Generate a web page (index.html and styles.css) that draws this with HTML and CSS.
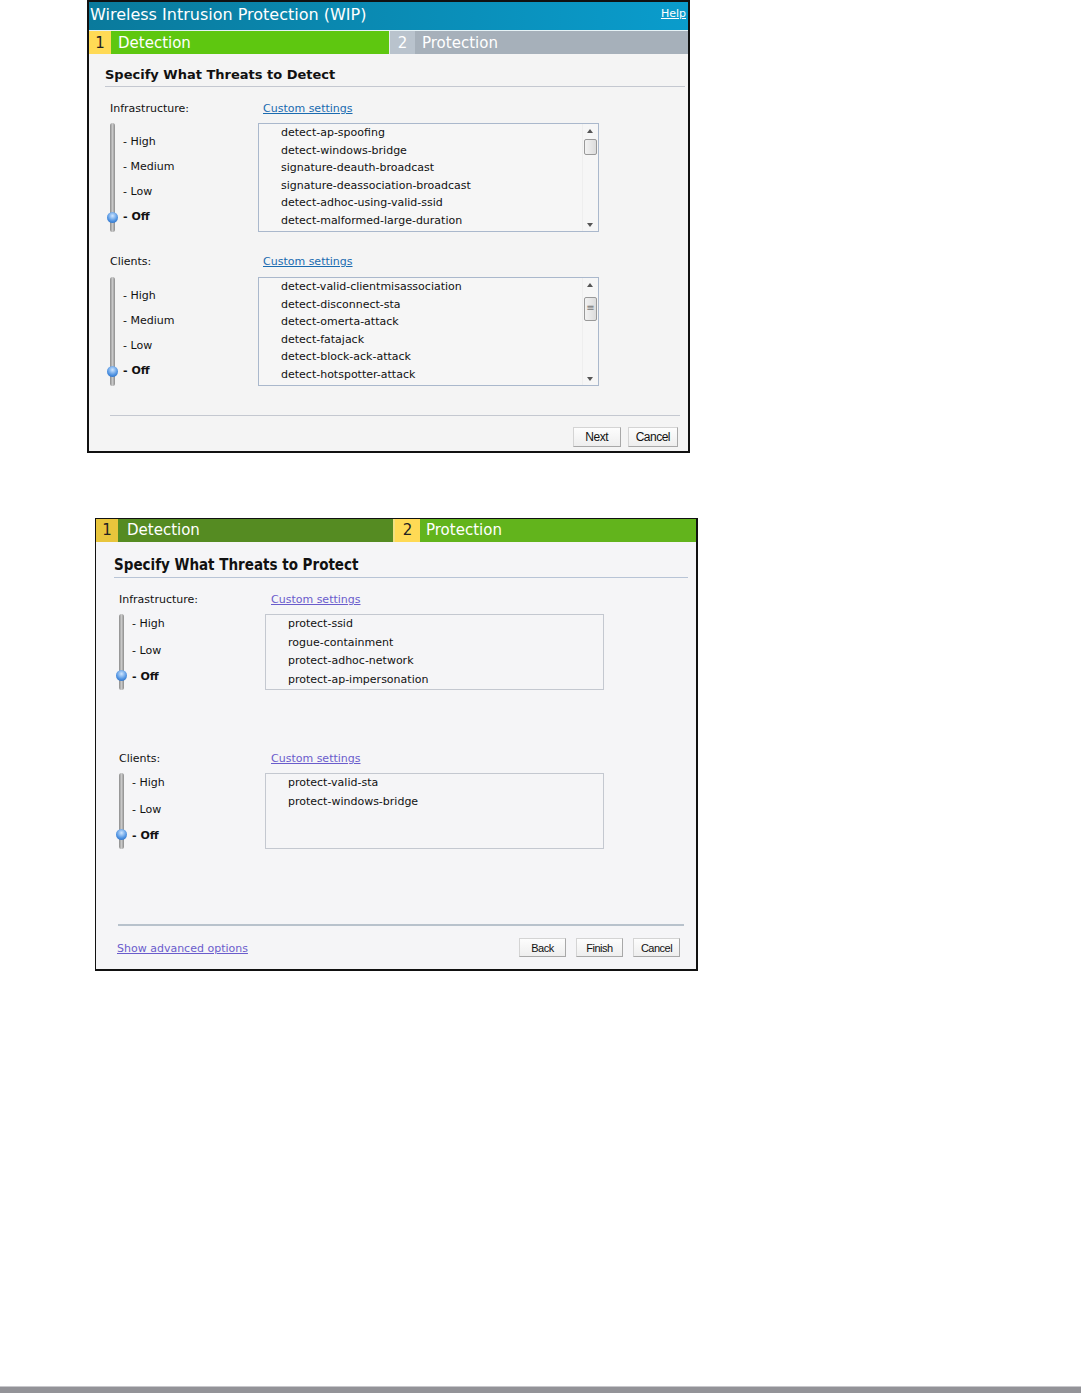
FILE: index.html
```html
<!DOCTYPE html>
<html lang="en">

<head>
    <meta charset="UTF-8">
    <meta name="viewport" content="width=device-width, initial-scale=1.0">
    <link rel="stylesheet" href="styles.css">
</head>

<body>

    <!-- Крок 1: виявлення -->
    <div class="wizard wizard-detect">
        <div class="title-bar">
            <span class="title">Wireless Intrusion Protection (WIP)</span>
            <a class="help" href="#">Help</a>
        </div>
        <div class="steps">
            <div class="step-num num-yellow">1</div>
            <div class="step-name name-green">Detection</div>
            <div class="step-num num-grey">2</div>
            <div class="step-name name-grey">Protection</div>
        </div>
        <div class="content">
            <h2 class="heading">Specify What Threats to Detect</h2>

            <div class="group">
                <div class="group-head">
                    <span class="group-label">Infrastructure:</span>
                    <a class="custom" href="#">Custom settings</a>
                </div>
                <div class="group-body">
                    <div class="slider slider-4">
                        <div class="track"><span class="knob"></span></div>
                        <ul class="levels">
                            <li>- High</li>
                            <li>- Medium</li>
                            <li>- Low</li>
                            <li class="active">- Off</li>
                        </ul>
                    </div>
                    <div class="listbox">
                        <ul class="items">
                            <li>detect-ap-spoofing</li>
                            <li>detect-windows-bridge</li>
                            <li>signature-deauth-broadcast</li>
                            <li>signature-deassociation-broadcast</li>
                            <li>detect-adhoc-using-valid-ssid</li>
                            <li>detect-malformed-large-duration</li>
                        </ul>
                        <div class="scrollbar">
                            <span class="arrow up"></span>
                            <div class="rail"><span class="thumb"></span></div>
                            <span class="arrow down"></span>
                        </div>
                    </div>
                </div>
            </div>

            <div class="group">
                <div class="group-head">
                    <span class="group-label">Clients:</span>
                    <a class="custom" href="#">Custom settings</a>
                </div>
                <div class="group-body">
                    <div class="slider slider-4">
                        <div class="track"><span class="knob"></span></div>
                        <ul class="levels">
                            <li>- High</li>
                            <li>- Medium</li>
                            <li>- Low</li>
                            <li class="active">- Off</li>
                        </ul>
                    </div>
                    <div class="listbox">
                        <ul class="items">
                            <li>detect-valid-clientmisassociation</li>
                            <li>detect-disconnect-sta</li>
                            <li>detect-omerta-attack</li>
                            <li>detect-fatajack</li>
                            <li>detect-block-ack-attack</li>
                            <li>detect-hotspotter-attack</li>
                        </ul>
                        <div class="scrollbar">
                            <span class="arrow up"></span>
                            <div class="rail rail-low"><span class="thumb grip">&#8801;</span></div>
                            <span class="arrow down"></span>
                        </div>
                    </div>
                </div>
            </div>

            <div class="footer">
                <span></span>
                <div class="buttons">
                    <button type="button">Next</button>
                    <button type="button">Cancel</button>
                </div>
            </div>
        </div>
    </div>

    <!-- Крок 2: захист -->
    <div class="wizard wizard-protect">
        <div class="steps">
            <div class="step-num num-gold">1</div>
            <div class="step-name name-dark">Detection</div>
            <div class="step-num num-yellow">2</div>
            <div class="step-name name-lime">Protection</div>
        </div>
        <div class="content">
            <h2 class="heading">Specify What Threats to Protect</h2>

            <div class="group">
                <div class="group-head">
                    <span class="group-label">Infrastructure:</span>
                    <a class="custom visited" href="#">Custom settings</a>
                </div>
                <div class="group-body">
                    <div class="slider slider-3">
                        <div class="track"><span class="knob"></span></div>
                        <ul class="levels">
                            <li>- High</li>
                            <li>- Low</li>
                            <li class="active">- Off</li>
                        </ul>
                    </div>
                    <div class="listbox">
                        <ul class="items">
                            <li>protect-ssid</li>
                            <li>rogue-containment</li>
                            <li>protect-adhoc-network</li>
                            <li>protect-ap-impersonation</li>
                        </ul>
                    </div>
                </div>
            </div>

            <div class="group">
                <div class="group-head">
                    <span class="group-label">Clients:</span>
                    <a class="custom visited" href="#">Custom settings</a>
                </div>
                <div class="group-body">
                    <div class="slider slider-3">
                        <div class="track"><span class="knob"></span></div>
                        <ul class="levels">
                            <li>- High</li>
                            <li>- Low</li>
                            <li class="active">- Off</li>
                        </ul>
                    </div>
                    <div class="listbox">
                        <ul class="items">
                            <li>protect-valid-sta</li>
                            <li>protect-windows-bridge</li>
                        </ul>
                    </div>
                </div>
            </div>

            <div class="footer">
                <a class="advanced" href="#">Show advanced options</a>
                <div class="buttons">
                    <button type="button">Back</button>
                    <button type="button">Finish</button>
                    <button type="button">Cancel</button>
                </div>
            </div>
        </div>
    </div>

    <div class="bottom-bar"></div>

</body>

</html>
```

FILE: styles.css
```css
html,
body {
    height: 100%;
}

body {
    margin: 0;
    background-color: #fff;
    font-family: "DejaVu Sans", Verdana, sans-serif;
    color: #111;
    display: flex;
    flex-direction: column;
}

ul {
    list-style: none;
    margin: 0;
    padding: 0;
}

.wizard {
    border: 2px solid #111;
    background-color: #f4f4f4;
}

.wizard-detect {
    width: 599px;
    height: 449px;
    margin-left: 87px;
}

.wizard-protect {
    width: 600px;
    height: 450px;
    margin-left: 95px;
    margin-top: 65px;
    border-width: 1px 2px 2px 1px;
    background-color: #f5f5f7;
}

.title-bar {
    display: flex;
    justify-content: space-between;
    align-items: center;
    height: 28px;
    padding: 0 2px 0 1px;
    background: linear-gradient(to right, #0a7a9c, #0a9ccc);
    border-bottom: 1px solid #e6f2f6;
}

.title {
    color: #fff;
    font-size: 16px;
    margin-top: -3px;
}

.help {
    color: #fff;
    font-size: 11px;
    align-self: flex-start;
    margin-top: 5px;
}

.steps {
    display: flex;
    height: 23px;
    color: #fff;
    font-size: 15px;
    line-height: 24px;
}

.step-num {
    width: 22px;
    text-align: center;
}

.step-name {
    padding-left: 7px;
}

.name-green {
    width: 271px;
    background-color: #5ec710;
    border-right: 1px solid #e8ecef;
}

.name-grey {
    flex: 1;
    background-color: #a6b0ba;
}

.num-yellow {
    background-color: #ffda55;
    color: #222;
}

.num-grey {
    width: 25px;
    background-color: #b9c3cd;
}

.num-gold {
    background-color: #e8c53c;
    color: #222;
}

.name-dark {
    width: 266px;
    padding-left: 9px;
    background-color: #558b22;
    border-right: 2px solid #f0e080;
}

.name-lime {
    flex: 1;
    padding-left: 6px;
    background-color: #62b41c;
}

.wizard-protect .steps {
    line-height: 23px;
}

.wizard-protect .num-yellow {
    width: 25px;
}

.content {
    padding: 13px 3px 0 16px;
}

.heading {
    margin: 0;
    padding: 0 0 4px 0;
    font-size: 13px;
    font-weight: bold;
    border-bottom: 1px solid #c4c8d0;
}

.wizard-protect .content {
    padding: 14px 8px 0 18px;
}

.wizard-protect .heading {
    font-family: "DejaVu Sans Condensed", "DejaVu Sans", sans-serif;
    font-stretch: condensed;
    font-size: 15px;
    padding-bottom: 3px;
    border-bottom-color: #b8c4d6;
}

.group {
    padding-left: 5px;
    margin-top: 15px;
}

.group + .group {
    margin-top: 23px;
}

.group-head {
    display: flex;
    font-size: 11px;
    height: 16px;
}

.group-label {
    width: 153px;
}

.custom {
    color: #1a6bb0;
}

.custom.visited,
.advanced {
    color: #6a5ccc;
}

.group-body {
    display: flex;
    margin-top: 5px;
}

.wizard-detect .group + .group .group-body {
    margin-top: 6px;
}

.slider {
    display: flex;
    width: 148px;
}

.track {
    position: relative;
    width: 5px;
    border-radius: 3px;
    background: linear-gradient(to right, #8c8c8c, #c8c8c8, #8c8c8c);
}

.knob {
    position: absolute;
    left: -3px;
    bottom: 9px;
    width: 11px;
    height: 11px;
    border-radius: 50%;
    background: radial-gradient(circle at 50% 35%, #cfe6ff, #4a8fe0 60%, #2a62b0);
}

.levels {
    padding-left: 8px;
    font-size: 11px;
}

.levels li {
    height: 25px;
}

.levels .active {
    font-weight: bold;
}

.slider-4 {
    height: 109px;
}

.slider-4 .levels {
    padding-top: 12px;
}

.slider-3 {
    height: 76px;
}

.slider-3 .levels {
    padding-top: 3px;
}

.slider-3 .levels li {
    height: 26.5px;
}

.listbox {
    display: flex;
    width: 339px;
    height: 107px;
    border: 1px solid #aab8cc;
    background-color: #f6f6f6;
}

.items {
    flex: 1;
    padding: 2px 0 0 22px;
    font-size: 11px;
}

.items li {
    height: 17.6px;
}

.scrollbar {
    display: flex;
    flex-direction: column;
    width: 15px;
    border-left: 1px solid #eee;
}

.arrow {
    height: 14px;
    position: relative;
}

.arrow::after {
    content: "";
    position: absolute;
    left: 4px;
    border-left: 3px solid transparent;
    border-right: 3px solid transparent;
}

.arrow.up::after {
    top: 5px;
    border-bottom: 4px solid #555;
}

.arrow.down::after {
    top: 6px;
    border-top: 4px solid #555;
}

.rail {
    flex: 1;
    padding: 1px 1px 0 1px;
}

.thumb {
    display: block;
    height: 14px;
    border: 1px solid #999;
    border-radius: 2px;
    background: linear-gradient(to right, #f2f2f2, #dcdcdc);
}

.rail-low {
    padding-top: 5px;
}

.grip {
    height: 22px;
    font-size: 10px;
    line-height: 20px;
    text-align: center;
    color: #777;
}

.wizard-protect .group {
    margin-top: 15px;
}

.wizard-protect .group + .group {
    margin-top: 62px;
}

.wizard-protect .group-label {
    width: 152px;
}

.wizard-protect .slider {
    width: 146px;
}

.wizard-protect .listbox {
    width: 337px;
    height: 74px;
    background-color: #f5f5f7;
    border-color: #c4c8d0;
}

.wizard-protect .items {
    padding-left: 22px;
}

.wizard-protect .items li {
    height: 18.6px;
}

.footer {
    display: flex;
    justify-content: space-between;
    align-items: flex-start;
    margin: 29px 5px 0 5px;
    padding-top: 11px;
    border-top: 1px solid #c4c8d0;
}

.wizard-protect .footer {
    margin: 75px 4px 0 4px;
    border-top: 2px solid #b8c2cc;
    padding-top: 12px;
}

.advanced {
    font-size: 11px;
    margin-top: 4px;
    margin-left: -1px;
}

.buttons {
    display: flex;
    gap: 7px;
    padding-right: 2px;
}

button {
    font-family: "Liberation Sans", Arial, sans-serif;
    font-size: 12px;
    letter-spacing: -0.5px;
    height: 20px;
    min-width: 48px;
    padding: 0 7px;
    color: #111;
    background: linear-gradient(#fdfdfd, #eeeeee);
    border: 1px solid #d4d4d4;
    border-right-color: #a8a8a8;
    border-bottom-color: #a8a8a8;
}

.wizard-protect .buttons {
    gap: 10px;
    padding-right: 4px;
}

.wizard-protect button {
    font-size: 11px;
    height: 19px;
    min-width: 47px;
    padding: 0 6px;
}

.bottom-bar {
    margin-top: auto;
    height: 6px;
    background-color: #939398;
    border-top: 1px solid #c8c8cc;
}
```
